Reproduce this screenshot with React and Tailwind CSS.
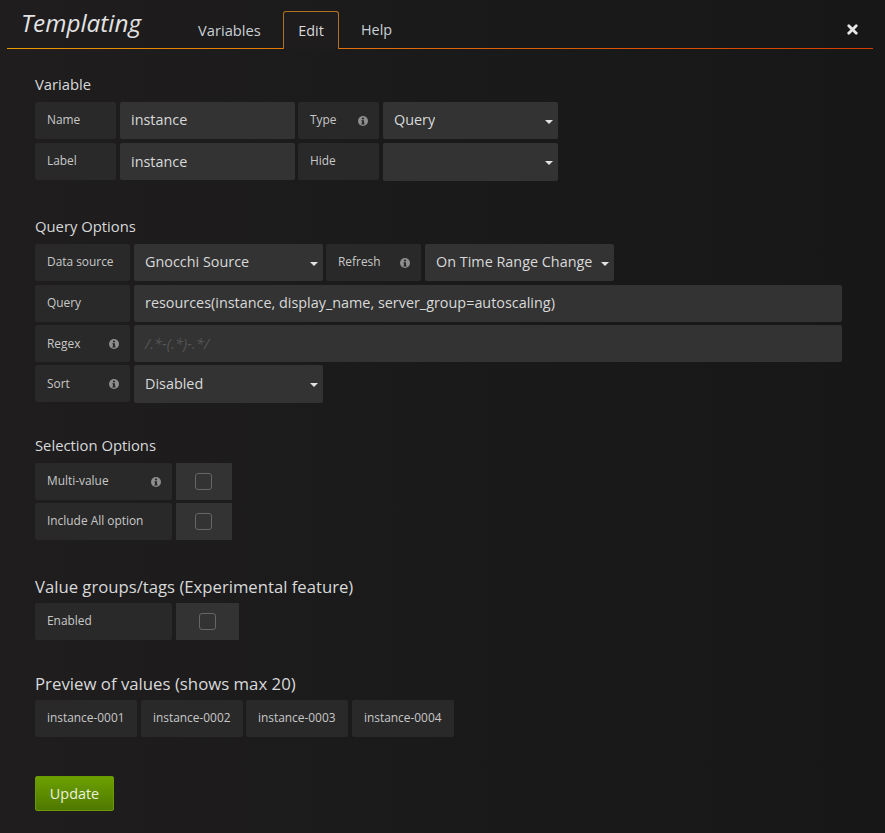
import { X } from "lucide-react";

function InfoIcon() {
    return (
        <svg viewBox="0 0 24 24" className="w-[10px] h-[10px] shrink-0">
            <circle cx="12" cy="12" r="12" fill="#8e8e8e" />
            <rect x="9.5" y="4" width="5" height="4" fill="#2a2a2b" />
            <path d="M8 10h6.5v8H16v2.5H8V18h1.5v-5.5H8z" fill="#2a2a2b" />
        </svg>
    );
}

function Label({ width, info, text, low }) {
    return (
        <div className={`${width} h-[37px] shrink-0 bg-[#292929] rounded-[2px] pl-3 pr-[11px] flex items-center justify-between text-[11.9px] text-[#c8c8c8] whitespace-nowrap`}>
            <span className={low ? "mt-[1px]" : "-mt-[1px]"}>{text}</span>
            {info && <InfoIcon />}
        </div>
    );
}

function Field({ width, children, muted, low }) {
    return (
        <div className={`${width} h-[37px] shrink-0 bg-[#333333] rounded-[2px] pl-[11px] flex items-center text-[14.4px] whitespace-nowrap overflow-hidden ${muted ? "text-[#555555] italic tracking-[0.2px]" : "text-[#d8d9da]"}`}>
            <span className={low ? "" : "-mt-[2px]"}>{children}</span>
        </div>
    );
}

function Select({ width, text, empty }) {
    return (
        <div className={`${width} ${empty ? "h-[38px]" : "h-[37px]"} shrink-0 relative bg-[#333333] rounded-[2px] pl-[11px] pr-[22px] flex items-center text-[14.4px] text-[#d8d9da] whitespace-nowrap`}>
            <span className={`overflow-hidden ${empty ? "" : "-mt-[2px]"}`}>{text}</span>
            <span className="absolute right-[5px] top-[18px] w-0 h-0 border-x-[4px] border-x-transparent border-t-[4px] border-t-[#e3e3e3]" />
        </div>
    );
}

function Check({ width, inset }) {
    return (
        <div className={`${width} ${inset} h-[37px] shrink-0 bg-[#333333] flex items-center`}>
            <div className="w-[17px] h-[17px] rounded-[3px] border border-[#666666] bg-[#333333]" />
        </div>
    );
}

function Heading({ children, className }) {
    return <h5 className={`text-[#d8d9da] leading-[20px] ${className}`}>{children}</h5>;
}

export default function App() {
    return (
        <div className="w-[885px] h-[833px] overflow-hidden bg-gradient-to-r from-[#1f1d1e] to-[#171717] font-['Open_Sans',sans-serif]">
            {/* Header */}
            <div className="mx-[7px] w-[866px] h-[49px] pt-[11px] flex relative border-b border-[#d44a00] [border-image:linear-gradient(to_right,#eb9a00,#e0660a_50%,#d43d00)_1]">
                <div className="w-[176px] pl-[14px] -mt-[4px] text-[24.3px] italic text-[#e3e3e3] leading-[32px]">Templating</div>
                <div className="pt-[8px] w-[100px] text-[14.7px] text-[#c8d0d6] pl-[15px] leading-[22px]">Variables</div>
                <div className="w-[56px] h-[38px] pt-[8px] text-center text-[14.4px] text-[#d8d9da] leading-[22px] rounded-t-[3px] border border-b-0 border-[#b3701f] bg-[#1e1c1d] z-10">Edit</div>
                <div className="pt-[8px] pl-[22px] text-[14.4px] text-[#c8d0d6] leading-[22px]">Help</div>
                <X size={15} strokeWidth={4.5} className="absolute right-[13px] top-[22px] text-[#e6e6e6]" />
            </div>

            <div className="pl-[35px] pt-[25px]">
                {/* Variable */}
                <Heading className="text-[14.8px]">Variable</Heading>
                <div className="mt-[8px] flex flex-col gap-[4px]">
                    <div className="flex">
                        <Label width="w-[81px]" text="Name" />
                        <div className="w-[4px]" />
                        <Field width="w-[175px]">instance</Field>
                        <div className="w-[3px]" />
                        <Label width="w-[81px]" text="Type" info />
                        <div className="w-[4px]" />
                        <Select width="w-[175px]" text="Query" />
                    </div>
                    <div className="flex">
                        <Label width="w-[81px]" text="Label" />
                        <div className="w-[4px]" />
                        <Field width="w-[175px]" low>instance</Field>
                        <div className="w-[3px]" />
                        <Label width="w-[81px]" text="Hide" />
                        <div className="w-[4px]" />
                        <Select width="w-[175px]" text="" empty />
                    </div>
                </div>

                {/* Query Options */}
                <Heading className="mt-[35px] text-[14.8px]">Query Options</Heading>
                <div className="mt-[8px] flex flex-col gap-[4px]">
                    <div className="flex">
                        <Label width="w-[95px]" text="Data source" />
                        <div className="w-[4px]" />
                        <Select width="w-[189px]" text="Gnocchi Source" />
                        <div className="w-[3px]" />
                        <Label width="w-[95px]" text="Refresh" info />
                        <div className="w-[4px]" />
                        <Select width="w-[189px]" text="On Time Range Change" />
                    </div>
                    <div className="flex">
                        <Label width="w-[95px]" text="Query" />
                        <div className="w-[4px]" />
                        <Field width="w-[708px]">resources(instance, display_name, server_group=autoscaling)</Field>
                    </div>
                    <div className="flex -mt-[1px]">
                        <Label width="w-[95px]" text="Regex" info low />
                        <div className="w-[4px]" />
                        <Field width="w-[708px]" muted low>/.*-(.*)-.*/</Field>
                    </div>
                    <div className="flex -mt-[1px]">
                        <Label width="w-[95px]" text="Sort" info low />
                        <div className="w-[4px]" />
                        <Select width="w-[189px]" text="Disabled" empty />
                    </div>
                </div>

                {/* Selection Options */}
                <Heading className="mt-[32px] text-[14.8px]">Selection Options</Heading>
                <div className="mt-[8px] flex flex-col gap-[3px]">
                    <div className="flex gap-[4px]">
                        <Label width="w-[137px]" text="Multi-value" info />
                        <Check width="w-[56px]" inset="pl-[19px]" />
                    </div>
                    <div className="flex gap-[4px]">
                        <Label width="w-[137px]" text="Include All option" />
                        <Check width="w-[56px]" inset="pl-[19px]" />
                    </div>
                </div>

                {/* Value groups */}
                <Heading className="mt-[37px] text-[16.7px]">Value groups/tags (Experimental feature)</Heading>
                <div className="mt-[6px] flex gap-[4px]">
                    <Label width="w-[137px]" text="Enabled" />
                    <Check width="w-[63px]" inset="pl-[23px]" />
                </div>

                {/* Preview */}
                <Heading className="mt-[34px] text-[16.8px]">Preview of values (shows max 20)</Heading>
                <div className="mt-[6px] flex">
                    <Label width="w-[102px]" text="instance-0001" />
                    <div className="w-[4px]" />
                    <Label width="w-[102px]" text="instance-0002" />
                    <div className="w-[3px]" />
                    <Label width="w-[102px]" text="instance-0003" />
                    <div className="w-[4px]" />
                    <Label width="w-[102px]" text="instance-0004" />
                </div>

                <button className="mt-[39px] w-[79px] h-[35px] rounded-[2px] border border-[#6a9a00] bg-gradient-to-b from-[#6ca100] to-[#4f7800] text-[14.4px] text-[#ecf2dc]">
                    Update
                </button>
            </div>
        </div>
    );
}
